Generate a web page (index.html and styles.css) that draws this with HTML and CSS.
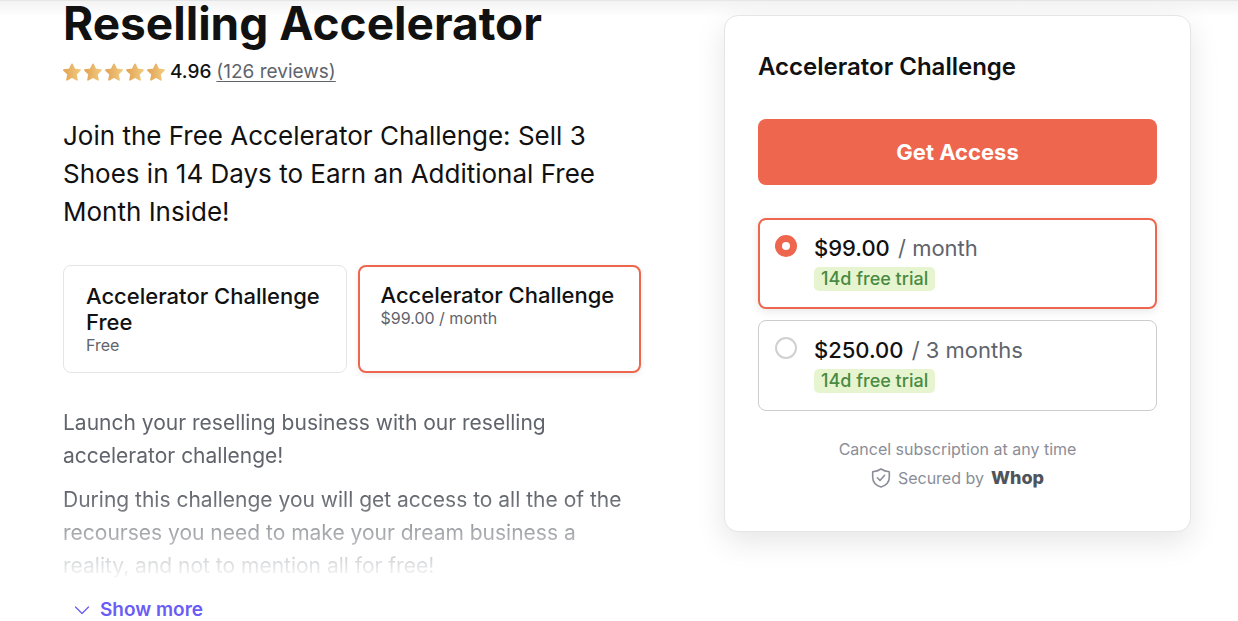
FILE: index.html
```html
<!DOCTYPE html>
<html lang="en">
<head>
    <meta charset="UTF-8">
    <meta name="viewport" content="width=device-width, initial-scale=1.0">
    <title>Reselling Accelerator</title>
    <link rel="stylesheet" href="styles.css">
</head>
<body>

<!-- Shared star shape -->
<svg class="defs" width="0" height="0" aria-hidden="true">
    <defs>
        <linearGradient id="gold" x1="0" y1="0" x2="1" y2="0">
            <stop offset="0" stop-color="#e3a355"/>
            <stop offset="1" stop-color="#f0cb80"/>
        </linearGradient>
        <symbol id="star" viewBox="0.5 0 17 17">
            <path fill="url(#gold)" stroke="url(#gold)" stroke-width="1.6" stroke-linejoin="round" d="M9 1.200l2.300 4.900 5.300.7-3.900 3.700 1 5.400L9 13.300l-4.700 2.600 1-5.400L1.400 6.800l5.300-.7z"/>
        </symbol>
    </defs>
</svg>

<main class="page">
    <section class="details">
        <h1 class="title">Reselling Accelerator</h1>

        <div class="rating">
            <span class="stars" role="img" aria-label="4.96 out of 5 stars">
                <svg><use href="#star"/></svg>
                <svg><use href="#star"/></svg>
                <svg><use href="#star"/></svg>
                <svg><use href="#star"/></svg>
                <svg><use href="#star"/></svg>
            </span>
            <span class="score">4.96</span>
            <a class="reviews" href="#reviews">(126 reviews)</a>
        </div>

        <p class="headline">Join the Free Accelerator Challenge: Sell 3 Shoes in 14 Days to Earn an Additional Free Month Inside!</p>

        <div class="plans">
            <button class="plan" type="button">
                <span class="plan-name">Accelerator Challenge Free</span>
                <span class="plan-price">Free</span>
            </button>
            <button class="plan active" type="button">
                <span class="plan-name">Accelerator Challenge</span>
                <span class="plan-price">$99.00 / month</span>
            </button>
        </div>

        <div class="description">
            <p>Launch your reselling business with our reselling accelerator challenge!</p>
            <p>During this challenge you will get access to all the of the recourses you need to make your dream business a reality, and not to mention all for free!</p>
        </div>

        <button class="show-more" type="button">
            <svg width="16" height="16" viewBox="0 0 16 16" fill="none" stroke="currentColor" stroke-width="1.3" stroke-linecap="round" stroke-linejoin="round"><path d="M1.500 5l6.500 6.500L14.500 5"/></svg>
            Show more
        </button>
    </section>

    <aside class="checkout">
        <h2 class="checkout-title">Accelerator Challenge</h2>
        <button class="access-btn" type="button">Get Access</button>

        <div class="options">
            <label class="option">
                <input class="radio" type="radio" name="billing" checked>
                <span class="option-text">
                    <span class="price"><b>$99.00</b> / month</span>
                    <span class="trial">14d free trial</span>
                </span>
            </label>
            <label class="option">
                <input class="radio" type="radio" name="billing">
                <span class="option-text">
                    <span class="price"><b>$250.00</b> / 3 months</span>
                    <span class="trial">14d free trial</span>
                </span>
            </label>
        </div>

        <p class="note">Cancel subscription at any time</p>
        <p class="note secured">
            <svg width="20" height="20" viewBox="0 0 20 20" fill="none" stroke="currentColor" stroke-width="1.6" stroke-linecap="round" stroke-linejoin="round"><path d="M10 1c2.400 1.600 5 2.500 8.300 2.800v5.400c0 4.600-3 8.100-8.300 9.800-5.300-1.700-8.300-5.200-8.300-9.800V3.800C5 3.500 7.600 2.600 10 1z"/><path d="M6.400 9.800l2.600 2.700 4.600-5.200"/></svg>
            <span>Secured by</span>
            <span class="brand">Whop</span>
        </p>
    </aside>
</main>

</body>
</html>
```
FILE: styles.css
```css
* {
    box-sizing: border-box;
}

body {
    margin: 0;
    background: #fff;
    color: #111;
    font-family: Inter, "Liberation Sans", sans-serif;
}

h1, h2, p {
    margin: 0;
}

button {
    font-family: inherit;
    cursor: pointer;
}

.defs {
    position: absolute;
}

.page {
    display: grid;
    grid-template-columns: 578fr 467fr;
    gap: 83px;
    align-items: start;
    padding: 0 47px 0 63px;
    border-top: 1px solid #e6e6e6;
    background: linear-gradient(#f3f3f3, #fff 16px);
}

.title {
    font-size: 46px;
    line-height: 44px;
    font-weight: 700;
}

.rating {
    display: flex;
    align-items: center;
    gap: 5px;
    margin-top: 15px;
    font-size: 19px;
    line-height: 24px;
}

.stars {
    display: flex;
    gap: 3px;
}

.stars svg {
    width: 18px;
    height: 18px;
}

.score {
    font-weight: 500;
}

.reviews {
    color: #60646c;
    text-underline-offset: 3px;
    text-decoration-thickness: 1px;
}

.headline {
    margin-top: 33px;
    font-size: 26px;
    line-height: 38px;
}

.plans {
    display: grid;
    grid-template-columns: 1fr 1fr;
    gap: 11px;
    margin-top: 34px;
}

.plan {
    display: flex;
    flex-direction: column;
    min-height: 108px;
    padding: 17px 22px;
    border: 1px solid #e5e5e5;
    border-radius: 8px;
    background: #fff;
    color: #111;
    text-align: left;
}

.plan.active {
    padding: 15px 21px;
    border: 2px solid #ee664d;
    box-shadow: 0 2px 6px rgba(0, 0, 0, 0.08);
}

.plan-name {
    font-size: 22px;
    line-height: 26px;
    font-weight: 500;
}

.plan-price {
    color: #60646c;
    font-size: 16px;
    line-height: 20px;
}

.description {
    display: grid;
    gap: 11px;
    margin-top: 33px;
    color: #60646c;
    font-size: 21px;
    line-height: 33px;
    -webkit-mask-image: linear-gradient(#000 50%, transparent);
    mask-image: linear-gradient(#000 50%, transparent);
}

.show-more {
    display: flex;
    align-items: center;
    gap: 10px;
    margin-top: 16px;
    padding: 0 11px;
    border: 0;
    background: none;
    color: #6a5cf5;
    font-size: 19px;
    line-height: 24px;
    font-weight: 600;
}

.checkout {
    margin-top: 14px;
    padding: 33px 33px 41px;
    border: 1px solid #e5e5e5;
    border-radius: 14px;
    background: #fff;
    box-shadow: 0 10px 30px rgba(0, 0, 0, 0.1);
}

.checkout-title {
    font-size: 24px;
    line-height: 36px;
    font-weight: 600;
}

.access-btn {
    width: 100%;
    height: 66px;
    margin-top: 34px;
    border: 0;
    border-radius: 8px;
    background: #ee664d;
    color: #fff;
    font-size: 22px;
    font-weight: 700;
}

.options {
    display: grid;
    gap: 11px;
    margin-top: 33px;
}

.option {
    display: flex;
    gap: 17px;
    min-height: 91px;
    padding: 16px;
    border: 1px solid #ccc;
    border-radius: 8px;
    cursor: pointer;
}

.option:has(:checked) {
    padding: 15px;
    border: 2px solid #ee664d;
    box-shadow: 0 2px 10px rgba(0, 0, 0, 0.1);
}

.radio {
    appearance: none;
    width: 22px;
    height: 22px;
    margin: 0;
    border: 2px solid #d0d0d0;
    border-radius: 50%;
}

.radio:checked {
    border: 7px solid #ee664d;
}

.option-text {
    display: flex;
    flex-direction: column;
    align-items: flex-start;
    gap: 6px;
}

.price {
    color: #60646c;
    font-size: 22px;
    line-height: 26px;
}

.price b {
    margin-right: 2px;
    color: #111;
    font-weight: 500;
}

.trial {
    padding: 0 7px;
    border-radius: 5px;
    background: #e6f5cf;
    color: #4a8a42;
    font-size: 18px;
    line-height: 24px;
    font-weight: 500;
}

.note {
    margin-top: 26px;
    color: #8b8d98;
    font-size: 16px;
    line-height: 24px;
    text-align: center;
}

.secured {
    display: flex;
    justify-content: center;
    align-items: center;
    gap: 7px;
    margin-top: 5px;
}

.brand {
    color: #4f545c;
    font-size: 18px;
    font-weight: 800;
}
```
